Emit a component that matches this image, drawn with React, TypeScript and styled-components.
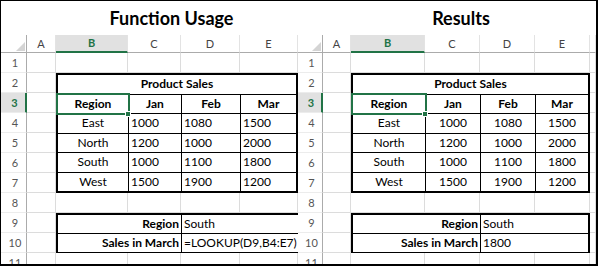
import React from "react";
import styled, { createGlobalStyle, css } from "styled-components";

const GREEN = "#217346";
const GRID = "#dcdcdc";
const HEAD_LINE = "#ababab";

const GlobalStyle = createGlobalStyle`
  html, body {
    margin: 0;
    padding: 0;
    background: #ffffff;
  }
  body {
    font-family: Lato, "Open Sans", sans-serif;
    color: #000;
  }
`;

type PanelSpec = {
  title: string;
  shift: number;
  widths: number[]; // row header, A..E, optional filler
  numAlign: "left" | "center";
  result: string;
};

const SALES = [
  ["East", "1000", "1080", "1500"],
  ["North", "1200", "1000", "2000"],
  ["South", "1000", "1100", "1800"],
  ["West", "1500", "1900", "1200"],
];

const PANELS: PanelSpec[] = [
  {
    title: "Function Usage",
    shift: 44,
    widths: [26, 29, 72, 53, 59, 58],
    numAlign: "left",
    result: "=LOOKUP(D9,B4:E7)",
  },
  {
    title: "Results",
    shift: 28,
    widths: [25, 28, 74, 55, 55, 55, 6],
    numAlign: "center",
    result: "1800",
  },
];

const Frame = styled.div`
  width: 598px;
  height: 266px;
  box-sizing: border-box;
  border-style: solid;
  border-color: #000;
  border-width: 1px 2px 2px 1px;
  display: flex;
  overflow: hidden;
  background: #fff;
`;

const Panel = styled.section<{ $width: number }>`
  width: ${(p) => p.$width}px;
  flex: none;
  display: flex;
  flex-direction: column;
  overflow: hidden;
`;

const Title = styled.h1<{ $shift: number }>`
  margin: 0;
  height: 34px;
  line-height: 34px;
  font-size: 18px;
  font-weight: 700;
  text-align: center;
  padding-left: ${(p) => p.$shift}px;
  white-space: nowrap;
`;

const Sheet = styled.div<{ $cols: string }>`
  display: grid;
  grid-template-columns: ${(p) => p.$cols};
  grid-template-rows: 18px repeat(11, 20px);
`;

const Corner = styled.div`
  display: flex;
  align-items: flex-end;
  justify-content: flex-end;
  padding: 0 1px 1px 0;
  border-right: 1px solid ${HEAD_LINE};
  border-bottom: 1px solid ${HEAD_LINE};
`;

const ColHead = styled.div<{ $active?: boolean }>`
  font-size: 11px;
  line-height: 17px;
  text-align: center;
  color: #444;
  border-right: 1px solid #e3e3e3;
  border-bottom: 1px solid ${HEAD_LINE};
  ${(p) =>
    p.$active &&
    css`
      background: #e1e1e1;
      color: ${GREEN};
      font-weight: 700;
      border-bottom: 2px solid ${GREEN};
      line-height: 16px;
    `}
`;

const RowHead = styled.div<{ $active?: boolean }>`
  font-size: 11px;
  line-height: 19px;
  text-align: center;
  padding-left: 3px;
  color: #555;
  border-right: 1px solid ${HEAD_LINE};
  border-bottom: 1px solid #ececec;
  ${(p) =>
    p.$active &&
    css`
      background: #e1e1e1;
      color: ${GREEN};
      font-weight: 700;
      border-right: 2px solid ${GREEN};
    `}
`;

const GridCell = styled.div`
  border-right: 1px solid ${GRID};
  border-bottom: 1px solid ${GRID};
`;

const Block = styled.div<{ $cols: string; $rows: number; $area: string }>`
  grid-area: ${(p) => p.$area};
  display: grid;
  grid-template-columns: ${(p) => p.$cols};
  grid-template-rows: repeat(${(p) => p.$rows}, 1fr);
  gap: 1px;
  background: #000;
  border: 2px solid #000;
`;

const TCell = styled.div<{
  $align?: "left" | "center" | "right";
  $bold?: boolean;
  $span?: number;
  $selected?: boolean;
}>`
  background: #fff;
  font-size: 12px;
  line-height: 18px;
  white-space: nowrap;
  padding: 0 2px;
  text-align: ${(p) => p.$align ?? "left"};
  font-weight: ${(p) => (p.$bold ? 700 : 400)};
  grid-column: span ${(p) => p.$span ?? 1};
  ${(p) =>
    p.$selected &&
    css`
      position: relative;
      z-index: 2;
      outline: 2px solid ${GREEN};

      &::after {
        content: "";
        position: absolute;
        right: -3px;
        bottom: -4px;
        width: 6px;
        height: 6px;
        box-sizing: border-box;
        background: ${GREEN};
        border: 1px solid #fff;
      }
    `}
`;

function CornerMark() {
  return (
    <svg width="9" height="9" viewBox="0 0 9 9">
      <polygon points="9,0 9,9 0,9" fill="#d4d4d4" />
    </svg>
  );
}

function Worksheet({ spec }: { spec: PanelSpec }) {
  const letters = ["A", "B", "C", "D", "E"].concat(
    spec.widths.length > 6 ? [""] : []
  );
  const [, , b, c, d] = spec.widths;
  const cells: React.ReactNode[] = [];

  for (let r = 1; r <= 11; r++) {
    cells.push(
      <RowHead key={`rh${r}`} $active={r === 3}>
        {r}
      </RowHead>
    );
    letters.forEach((l, i) => {
      const covered =
        i >= 1 && i <= 4 && ((r >= 2 && r <= 7) || r === 9 || r === 10);
      if (!covered) cells.push(<GridCell key={`c${r}-${i}`} />);
    });
  }

  return (
    <Sheet $cols={spec.widths.map((w) => `${w}px`).join(" ")}>
      <Corner>
        <CornerMark />
      </Corner>
      {letters.map((l, i) => (
        <ColHead key={`ch${i}`} $active={l === "B"}>
          {l}
        </ColHead>
      ))}
      {cells}

      <Block
        $area="3 / 3 / 9 / 7"
        $rows={6}
        $cols={`${b - 2}px ${c - 1}px ${d - 1}px 1fr`}
      >
        <TCell $span={4} $align="center" $bold>
          Product Sales
        </TCell>
        <TCell $align="center" $bold $selected>
          Region
        </TCell>
        <TCell $align="center" $bold>
          Jan
        </TCell>
        <TCell $align="center" $bold>
          Feb
        </TCell>
        <TCell $align="center" $bold>
          Mar
        </TCell>
        {SALES.map((row) =>
          row.map((v, i) => (
            <TCell
              key={`${row[0]}-${i}`}
              $align={i === 0 ? "center" : spec.numAlign}
            >
              {v}
            </TCell>
          ))
        )}
      </Block>

      <Block $area="10 / 3 / 12 / 7" $rows={2} $cols={`${b + c - 2}px 1fr`}>
        <TCell $align="right" $bold>
          Region
        </TCell>
        <TCell>South</TCell>
        <TCell $align="right" $bold>
          Sales in March
        </TCell>
        <TCell>{spec.result}</TCell>
      </Block>
    </Sheet>
  );
}

export default function App() {
  return (
    <>
      <GlobalStyle />
      <Frame>
        {PANELS.map((spec) => (
          <Panel
            key={spec.title}
            $width={spec.widths.reduce((a, w) => a + w, 0)}
          >
            <Title $shift={spec.shift}>{spec.title}</Title>
            <Worksheet spec={spec} />
          </Panel>
        ))}
      </Frame>
    </>
  );
}
